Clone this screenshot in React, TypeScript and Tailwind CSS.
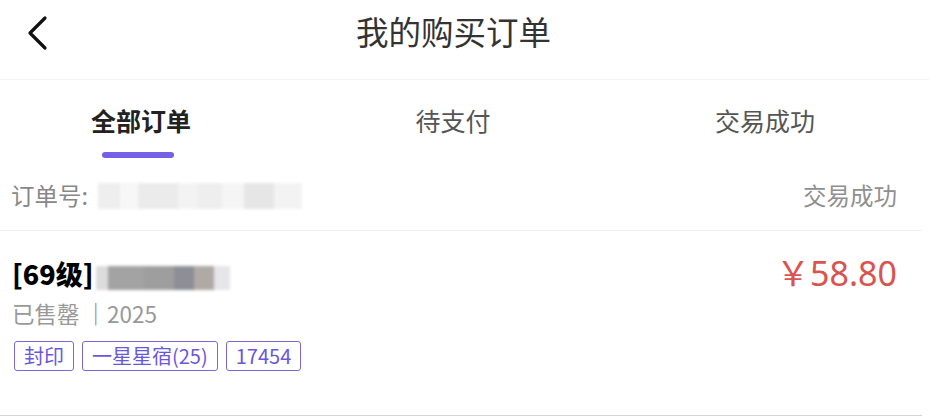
import React from "react";

const font = { fontFamily: '"Noto Sans CJK SC", "Noto Sans", sans-serif' };

function Blur({ blocks, className }: { blocks: { w: number; c: string }[]; className?: string }) {
  return (
    <div className={"flex blur-[1.5px] " + (className ?? "")}>
      {blocks.map((b, i) => (
        <div key={i} style={{ width: b.w, backgroundColor: b.c }} className="h-full" />
      ))}
    </div>
  );
}

export default function App() {
  return (
    <div className="w-[929px] h-[419px] bg-white overflow-hidden" style={font}>
      {/* Header */}
      <div className="relative h-[80px] flex items-center justify-center border-b border-[#f3f3f3]">
        <svg className="absolute left-[24px] top-[15px]" width="28" height="36" viewBox="0 0 28 36">
          <path d="M21 3 L6 18 L21 33" fill="none" stroke="#111" strokeWidth="3.2" strokeLinecap="round" strokeLinejoin="round" />
        </svg>
        <span className="text-[32.5px] text-[#333] leading-none -mt-[16px] -ml-[22px]">我的购买订单</span>
      </div>

      {/* Tabs */}
      <div className="grid grid-cols-3 w-[936px] -ml-[15px] h-[82px]">
        <div className="flex flex-col items-center pt-[24px]">
          <span className="text-[25px] font-bold text-[#222] leading-[33px]">全部订单</span>
          <div className="mt-[15px] -ml-[6px] w-[72px] h-[6px] rounded-full bg-[#7560e6]" />
        </div>
        <div className="flex flex-col items-center pt-[24px]">
          <span className="text-[25px] text-[#555] leading-[33px]">待支付</span>
        </div>
        <div className="flex flex-col items-center pt-[24px]">
          <span className="text-[25px] text-[#555] leading-[33px]">交易成功</span>
        </div>
      </div>

      {/* Order card */}
      <div className="w-[922px]">
        <div className="h-[69px] flex items-center justify-between pl-[11px] pr-[25px] border-b border-[#f0f0f0]">
          <div className="flex items-center">
            <span className="text-[23.5px] text-[#888]">订单号:</span>
            <Blur
              className="ml-[10px] h-[26px]"
              blocks={[
                { w: 22, c: "#eeeeee" },
                { w: 18, c: "#f7f7f7" },
                { w: 40, c: "#ebebeb" },
                { w: 20, c: "#f3f3f3" },
                { w: 24, c: "#eeeeee" },
                { w: 22, c: "#f5f5f5" },
                { w: 30, c: "#e6e6e6" },
                { w: 28, c: "#f3f3f3" },
              ]}
            />
          </div>
          <span className="text-[23.5px] text-[#8f8f8f]">交易成功</span>
        </div>

        <div className="h-[185px] border-b border-[#d4d4d4] pl-[12px] pr-[25px] pt-[22px]">
          <div className="flex items-start justify-between">
            <div className="flex items-center h-[40px]">
              <span className="text-[27px] font-extrabold text-black leading-none">[69级]</span>
              <Blur
                className="ml-[2px] mt-[10px] h-[24px]"
                blocks={[
                  { w: 12, c: "#dcdcdc" },
                  { w: 36, c: "#a3a3a3" },
                  { w: 30, c: "#9e9e9e" },
                  { w: 20, c: "#8c8f96" },
                  { w: 20, c: "#b0aaa6" },
                  { w: 16, c: "#e6e6e8" },
                ]}
              />
            </div>
            <span className="text-[34px] text-[#d9534f] leading-[40px]" style={{ fontFamily: '"Noto Sans", "Noto Sans CJK SC", sans-serif' }}>
              ￥58.80
            </span>
          </div>
          <div className="mt-[4px] text-[22.5px] text-[#999] leading-[32px]">
            已售罄 <span className="text-[#888]">｜</span>2025
          </div>
          <div className="mt-[12px] ml-[2px] flex gap-[8px]">
            {["封印", "一星星宿(25)", "17454"].map((t) => (
              <span
                key={t}
                className="h-[30px] px-[9px] flex items-center border border-[#7a68e0] rounded-[3px] text-[20px] text-[#6a57dc] leading-none"
              >
                {t}
              </span>
            ))}
          </div>
        </div>
      </div>
    </div>
  );
}
